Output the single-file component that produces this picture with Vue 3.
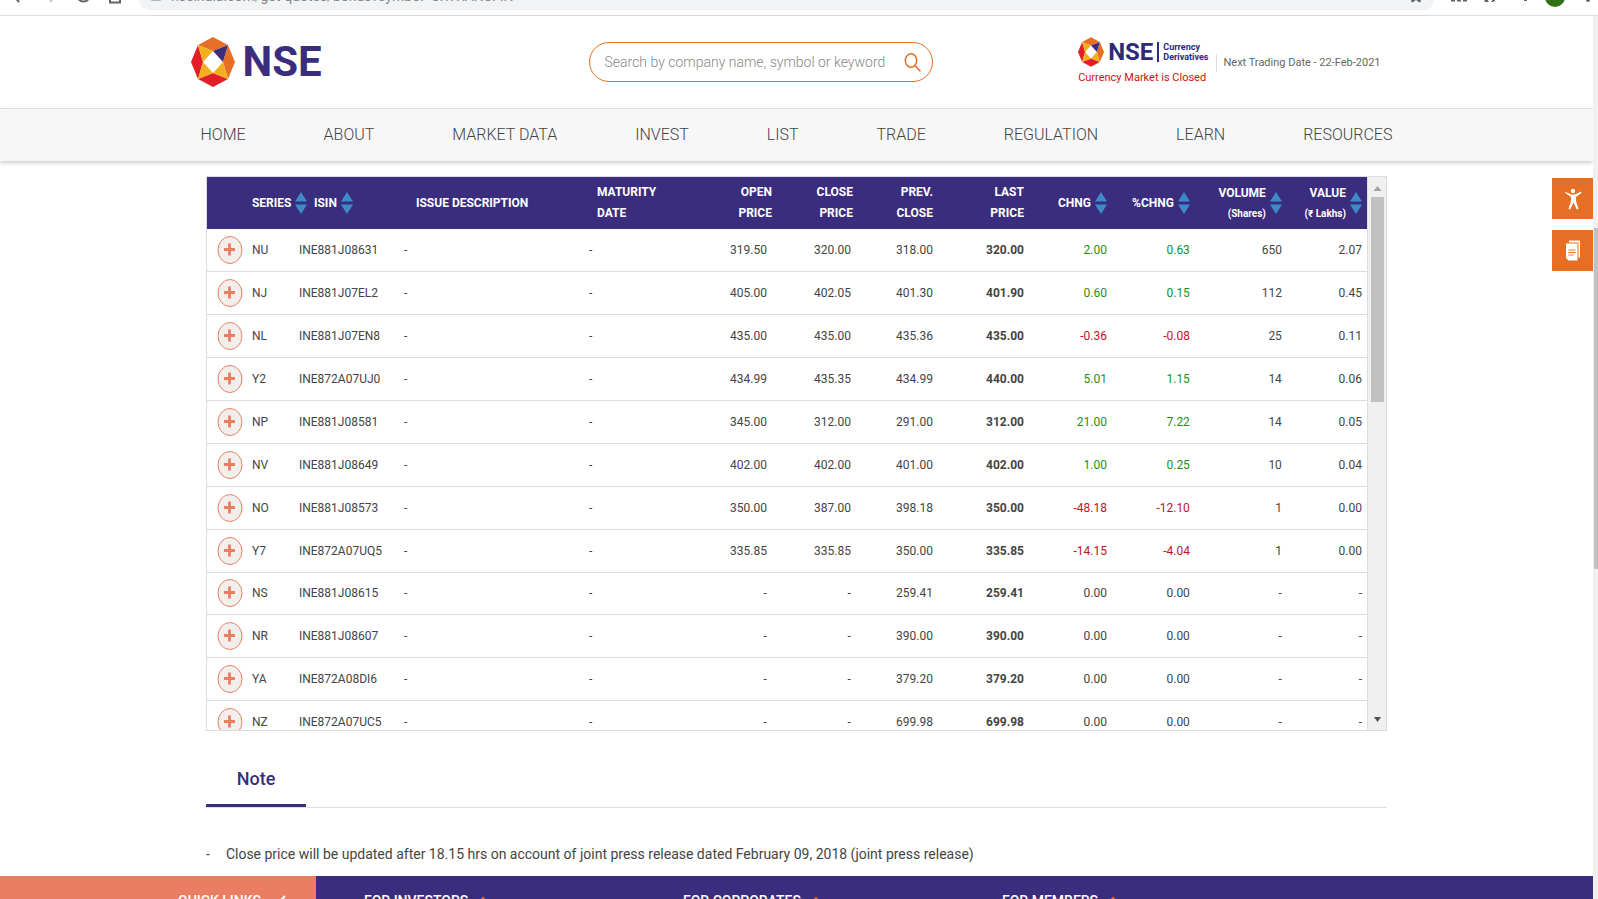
<script setup>
const nav = ['HOME', 'ABOUT', 'MARKET DATA', 'INVEST', 'LIST', 'TRADE', 'REGULATION', 'LEARN', 'RESOURCES']
const facets = [
  ['7,8 22,0 37,8 22,14', '#e66e25'],
  ['7,8 0,25 7,42 12,25', '#e21f26'],
  ['37,8 44,25 37,42 32,25', '#e66e25'],
  ['22,50 37,42 22,36 7,42', '#e21f26'],
  ['7,8 22,14 12,25', '#f2b01e'],
  ['37,8 22,14 32,25', '#3a2d7d'],
  ['7,42 12,25 22,36', '#f2b01e'],
  ['37,42 32,25 22,36', '#f2b01e']
]
const columns = [
  { key: 'toggle', label: '', width: 40 },
  { key: 'series', label: 'SERIES', width: 47, sort: true },
  { key: 'isin', label: 'ISIN', width: 105, sort: true },
  { key: 'issue', label: 'ISSUE DESCRIPTION', width: 185 },
  { key: 'maturity', label: 'MATURITY', second: 'DATE', width: 107 },
  { key: 'open', label: 'OPEN', second: 'PRICE', width: 81 },
  { key: 'close', label: 'CLOSE', second: 'PRICE', width: 84 },
  { key: 'prev', label: 'PREV.', second: 'CLOSE', width: 82 },
  { key: 'last', label: 'LAST', second: 'PRICE', width: 91 },
  { key: 'chng', label: 'CHNG', width: 83, sort: true },
  { key: 'pchng', label: '%CHNG', width: 83, sort: true },
  { key: 'volume', label: 'VOLUME', unit: '(Shares)', width: 92, sort: true },
  { key: 'value', label: 'VALUE', unit: '(₹ Lakhs)', width: 80, sort: true }
]
const total = columns.reduce((sum, c) => sum + c.width, 0)
const rows = [
  ['NU', 'INE881J08631', '-', '-', '319.50', '320.00', '318.00', '320.00', '2.00', '0.63', '650', '2.07'],
  ['NJ', 'INE881J07EL2', '-', '-', '405.00', '402.05', '401.30', '401.90', '0.60', '0.15', '112', '0.45'],
  ['NL', 'INE881J07EN8', '-', '-', '435.00', '435.00', '435.36', '435.00', '-0.36', '-0.08', '25', '0.11'],
  ['Y2', 'INE872A07UJ0', '-', '-', '434.99', '435.35', '434.99', '440.00', '5.01', '1.15', '14', '0.06'],
  ['NP', 'INE881J08581', '-', '-', '345.00', '312.00', '291.00', '312.00', '21.00', '7.22', '14', '0.05'],
  ['NV', 'INE881J08649', '-', '-', '402.00', '402.00', '401.00', '402.00', '1.00', '0.25', '10', '0.04'],
  ['NO', 'INE881J08573', '-', '-', '350.00', '387.00', '398.18', '350.00', '-48.18', '-12.10', '1', '0.00'],
  ['Y7', 'INE872A07UQ5', '-', '-', '335.85', '335.85', '350.00', '335.85', '-14.15', '-4.04', '1', '0.00'],
  ['NS', 'INE881J08615', '-', '-', '-', '-', '259.41', '259.41', '0.00', '0.00', '-', '-'],
  ['NR', 'INE881J08607', '-', '-', '-', '-', '390.00', '390.00', '0.00', '0.00', '-', '-'],
  ['YA', 'INE872A08DI6', '-', '-', '-', '-', '379.20', '379.20', '0.00', '0.00', '-', '-'],
  ['NZ', 'INE872A07UC5', '-', '-', '-', '-', '699.98', '699.98', '0.00', '0.00', '-', '-']
]
const tone = (value, i) => {
  if (i !== 8 && i !== 9) return ''
  const n = parseFloat(value)
  return n > 0 ? 'up' : n < 0 ? 'down' : ''
}
const footerGroups = ['FOR INVESTORS', 'FOR CORPORATES', 'FOR MEMBERS']
</script>

<template>
  <div class="window">
    <div class="chrome">
      <div class="tools">
        <svg width="139" height="15" viewBox="0 0 139 15" fill="none" stroke="#5f6368" stroke-width="2">
          <path d="M14 -4l5 6" />
          <path d="M50 2l3 -4" stroke="#bdc1c6" />
          <path d="M77 -5a6.500 6.500 0 0 0 13 0" />
          <path d="M110 -3v5.500h10v-5.500" />
        </svg>
      </div>
      <div class="address">
        <svg class="lock" width="10" height="12" viewBox="0 0 10 12"><path d="M1 0v10h8v-10" fill="none" stroke="#a0a4a8" stroke-width="1.500" /></svg>
        <span class="url">nseindia.com/get-quotes/bonds?symbol=SRTRANSFIN</span>
        <svg class="star" width="12" height="12" viewBox="0 0 12 12"><path d="M2 8l4-3 4 3M2 4v4M10 4v4" fill="none" stroke="#5f6368" stroke-width="1.500" /></svg>
      </div>
      <svg class="extensions" width="164" height="15" viewBox="0 0 164 15">
        <g fill="#5f6368">
          <path d="M17 0h4v1.500h-4zM23 0h4v1.500h-4zM29 0h4v1.500h-4z" />
          <path d="M49 -3h3l3 5h-4zM57 2l4 -5v4l-2 1z" />
          <rect x="90" y="-2" width="3" height="3" />
          <circle cx="154" cy="0" r="2" />
        </g>
        <circle cx="121" cy="-3" r="10" fill="#2f6f16" />
      </svg>
    </div>

    <div class="viewport">
      <div class="page">
        <header class="top">
          <a class="logo" href="#" aria-label="NSE home">
            <svg width="44" height="50" viewBox="0 0 44 50"><polygon v-for="(f, i) in facets" :key="i" :points="f[0]" :fill="f[1]" /></svg>
            <span>NSE</span>
          </a>
          <form class="search" role="search" @submit.prevent>
            <input type="search" aria-label="Search" placeholder="Search by company name, symbol or keyword" />
            <button type="submit" aria-label="Submit search">
              <svg width="17" height="19" viewBox="0 0 17 19" fill="none" stroke="#e66e25" stroke-width="1.500" stroke-linecap="round"><ellipse cx="7" cy="7.500" rx="5.700" ry="6.700" /><path d="M11 12.500l5 5.500" /></svg>
            </button>
          </form>
          <div class="market">
            <div class="currency">
              <div class="brand">
                <svg width="26" height="30" viewBox="0 0 44 50"><polygon v-for="(f, i) in facets" :key="i" :points="f[0]" :fill="f[1]" /></svg>
                <span class="brand-name">NSE</span>
                <span class="brand-unit">Currency<br />Derivatives</span>
              </div>
              <div class="status">Currency Market is Closed</div>
            </div>
            <div class="trading">Next Trading Date - 22-Feb-2021</div>
          </div>
        </header>

        <nav class="nav">
          <div class="nav-inner">
            <a v-for="item in nav" :key="item" href="#">{{ item }}</a>
          </div>
        </nav>

        <main class="content">
          <div class="table-box">
            <div class="table-clip">
              <table>
                <colgroup><col v-for="c in columns" :key="c.key" :style="{ width: (c.width / total) * 100 + '%' }" /></colgroup>
                <thead>
                  <tr>
                    <th v-for="c in columns" :key="c.key" :class="c.key" scope="col">
                      <button v-if="c.sort" type="button" class="sort">
                        <span>{{ c.label }}<small v-if="c.unit">{{ c.unit }}</small></span>
                        <svg width="12" height="22" viewBox="0 0 12 22" fill="#4089c8"><path d="M6 0l6 9.500H0zM6 22l6 -9.500H0z" /></svg>
                      </button>
                      <template v-else>{{ c.label }}<br v-if="c.second" />{{ c.second }}</template>
                    </th>
                  </tr>
                </thead>
                <tbody>
                  <tr v-for="row in rows" :key="row[1]">
                    <td class="toggle">
                      <button type="button" :aria-label="'Expand ' + row[0]">
                        <svg width="26" height="28" viewBox="0 0 26 28"><ellipse cx="13" cy="14" rx="12" ry="13.500" fill="#f1eeec" stroke="#e98065" /><path d="M12.500 7.500v12M7 13.500h11" stroke="#e97e62" stroke-width="2.800" /></svg>
                      </button>
                    </td>
                    <td v-for="(cell, i) in row" :key="i" :class="[columns[i + 1].key, tone(cell, i)]">{{ cell }}</td>
                  </tr>
                </tbody>
              </table>
            </div>
            <div class="bar">
              <svg width="17" height="20" viewBox="0 0 17 20"><path d="M4.500 14l4 -5 4 5z" fill="#a3a3a3" /></svg>
              <div class="thumb"></div>
              <svg class="arrow-down" width="17" height="20" viewBox="0 0 17 20"><path d="M5 7l3.500 5 3.500 -5z" fill="#505050" /></svg>
            </div>
          </div>

          <div class="tabs"><button type="button" class="tab">Note</button></div>
          <ul class="notes"><li>Close price will be updated after 18.15 hrs on account of joint press release dated February 09, 2018 (joint press release)</li></ul>
        </main>

        <footer class="footer">
          <a class="quick" href="#">QUICK LINKS
            <svg width="12" height="14" viewBox="0 0 12 14" fill="none" stroke="#fff" stroke-width="2"><path d="M10 2l-5 5 5 5" /></svg>
          </a>
          <div class="groups">
            <a v-for="g in footerGroups" :key="g" href="#">{{ g }}
              <svg width="10" height="14" viewBox="0 0 10 14" fill="none" stroke="#e66e25" stroke-width="2"><path d="M1 9l4 -5 4 5" /></svg>
            </a>
          </div>
        </footer>

        <aside class="side">
          <button type="button" aria-label="Accessibility">
            <svg width="18" height="22" viewBox="0 0 18 22" fill="#fff"><circle cx="9" cy="3" r="2.200" /><path d="M1 3.500l6 3h4l6 -3 .5 1.500 -5.500 4v4l2.500 8 -1.700 .6 -3.300 -7 -3.300 7 -1.700 -.6 2.500 -8v-4l-5.500 -4z" /></svg>
          </button>
          <button type="button" aria-label="Documents">
            <svg width="16" height="22" viewBox="0 0 16 22"><path d="M4 0.500h11v17h-1.500v-15h-9.500z" fill="#fff" /><path d="M1 3.500h11.500v17h-9l-2.500 -2.500z" fill="#fff" /><path d="M3.500 10h7M3.500 12.500h7M3.500 15h5" stroke="#e66e25" /></svg>
          </button>
        </aside>
      </div>
      <div class="page-bar">
        <div class="page-thumb"></div>
      </div>
    </div>
  </div>
</template>

<style>
body { margin: 0; background: #fff; }
</style>

<style scoped>
* { box-sizing: border-box; }
button { border: 0; padding: 0; background: none; font: inherit; color: inherit; cursor: pointer; }
a { color: inherit; text-decoration: none; }
svg { display: block; flex: none; }
.window {
  height: 100vh;
  display: flex;
  flex-direction: column;
  overflow: hidden;
  font-family: Roboto, sans-serif;
  font-size: 12px;
  color: #444;
}
.chrome { flex: none; height: 16px; display: flex; border-bottom: 1px solid #dadce0; overflow: hidden; }
.tools { width: 139px; flex: none; }
.address {
  flex: 1;
  height: 10px;
  padding: 0 12px;
  display: flex;
  align-items: flex-end;
  gap: 10px;
  background: #f1f3f4;
  border-radius: 0 0 16px 16px;
  overflow: hidden;
}
.lock { margin-bottom: 8px; }
.url { flex: 1; font-size: 14px; line-height: 20px; color: #80868b; margin-bottom: 4px; }
.star { margin-bottom: 4px; }
.viewport { flex: 1; min-height: 0; display: flex; }
.page { position: relative; flex: 1; min-width: 0; overflow: hidden; }
.page-bar { width: 5px; flex: none; padding: 212px 0 0 1px; background: #f0f0f0; }
.page-thumb { height: 341px; background: #c1c1c1; }

.top {
  height: 92px;
  max-width: 1212px;
  margin: 0 auto;
  padding-right: 22px;
  display: grid;
  grid-template-columns: 398px 344px 1fr;
  align-items: center;
}
.logo { display: flex; align-items: center; gap: 8px; color: #3a2d7d; font-size: 42px; line-height: 50px; font-weight: 700; }
.search { height: 40px; display: flex; align-items: center; padding: 0 11px 0 15px; border: 1px solid #e66e25; border-radius: 20px; }
.search input { flex: 1; min-width: 0; border: 0; padding: 0; background: none; outline: none; font: 300 14px/20px Roboto, sans-serif; color: #555; }
.search input::placeholder { color: #888; opacity: 1; }
.market { display: flex; align-items: center; justify-content: flex-end; padding-top: 2px; }
.currency { padding-right: 8px; }
.brand { display: flex; align-items: center; gap: 4px; color: #2e2a78; font-weight: 700; }
.brand-name { font-size: 24px; line-height: 30px; }
.brand-unit { border-left: 2px solid #2e2a78; padding-left: 4px; font-size: 9px; line-height: 10px; }
.status { color: #c11; font-size: 11px; line-height: 22px; }
.trading { padding-left: 6px; border-left: 1px solid #ddd; color: #666; font-size: 11px; line-height: 18px; }

.nav { border-top: 1px solid #ddd; background: #f7f7f7; box-shadow: 0 2px 4px rgba(0, 0, 0, 0.2); }
.nav-inner { max-width: 1192px; margin: 0 auto; height: 52px; display: flex; align-items: center; justify-content: space-between; }
.nav a { font-size: 16px; font-weight: 300; line-height: 20px; color: #444; }

.content { max-width: 1181px; margin: 0 auto; padding-top: 15px; }
.table-box { height: 555px; display: flex; border: 1px solid #ddd; overflow: hidden; }
.table-clip { flex: 1; min-width: 0; overflow: hidden; }
table { width: 100%; height: 567px; table-layout: fixed; border-collapse: collapse; }
th {
  height: 52px;
  padding: 0 5px;
  background: #3a2d7d;
  color: #fff;
  line-height: 21px;
  font-weight: 700;
  text-align: left;
  white-space: nowrap;
}
td { height: 42px; padding: 0 5px; border-bottom: 1px solid #ddd; white-space: nowrap; }
td.toggle { padding: 0 0 0 10px; }
.toggle button { display: block; }
th.isin { padding-left: 20px; }
th.issue { padding-left: 17px; }
th.maturity { padding-left: 13px; }
.open, .close, .prev, .last, .chng, .pchng, .volume, .value { text-align: right; }
th.open { padding-right: 0; }
th.close { padding-right: 3px; }
td.last { font-weight: 700; }
.up { color: #1a9020; }
.down { color: #c01525; }
.sort { display: inline-flex; align-items: center; gap: 4px; text-align: right; vertical-align: middle; }
.sort small { display: block; font-size: 10px; line-height: 19px; }
.bar { width: 19px; flex: none; display: flex; flex-direction: column; align-items: center; background: #f0f0f0; border-left: 1px solid #ddd; }
.thumb { width: 13px; height: 205px; background: #c1c1c1; }
.arrow-down { margin-top: auto; }

.tabs { margin-top: 22px; border-bottom: 1px solid #ddd; display: flex; }
.tab { width: 100px; height: 54px; border-bottom: 3px solid #3a2d7d; font-size: 18px; font-weight: 500; line-height: 24px; color: #3a2d7d; }
.notes { list-style: none; margin: 0; padding: 34px 0 10px; font-size: 14px; line-height: 24px; }
.notes li { display: flex; gap: 16px; }
.notes li::before { content: "-"; }

.footer { display: grid; grid-template-columns: 316px 1fr; color: #fff; font-size: 14px; font-weight: 500; line-height: 20px; }
.footer a { display: flex; align-items: center; gap: 14px; }
.quick { background: #e97e62; padding: 15px 0 20px 178px; }
.groups { background: #3a2d7d; padding: 15px 0 20px 48px; display: grid; grid-template-columns: 319px 319px 1fr; }
.groups a { gap: 10px; }

.side { position: absolute; right: 0; top: 162px; display: flex; flex-direction: column; gap: 11px; }
.side button { width: 41px; height: 41px; display: flex; align-items: center; justify-content: center; background: #e66e25; }
</style>
